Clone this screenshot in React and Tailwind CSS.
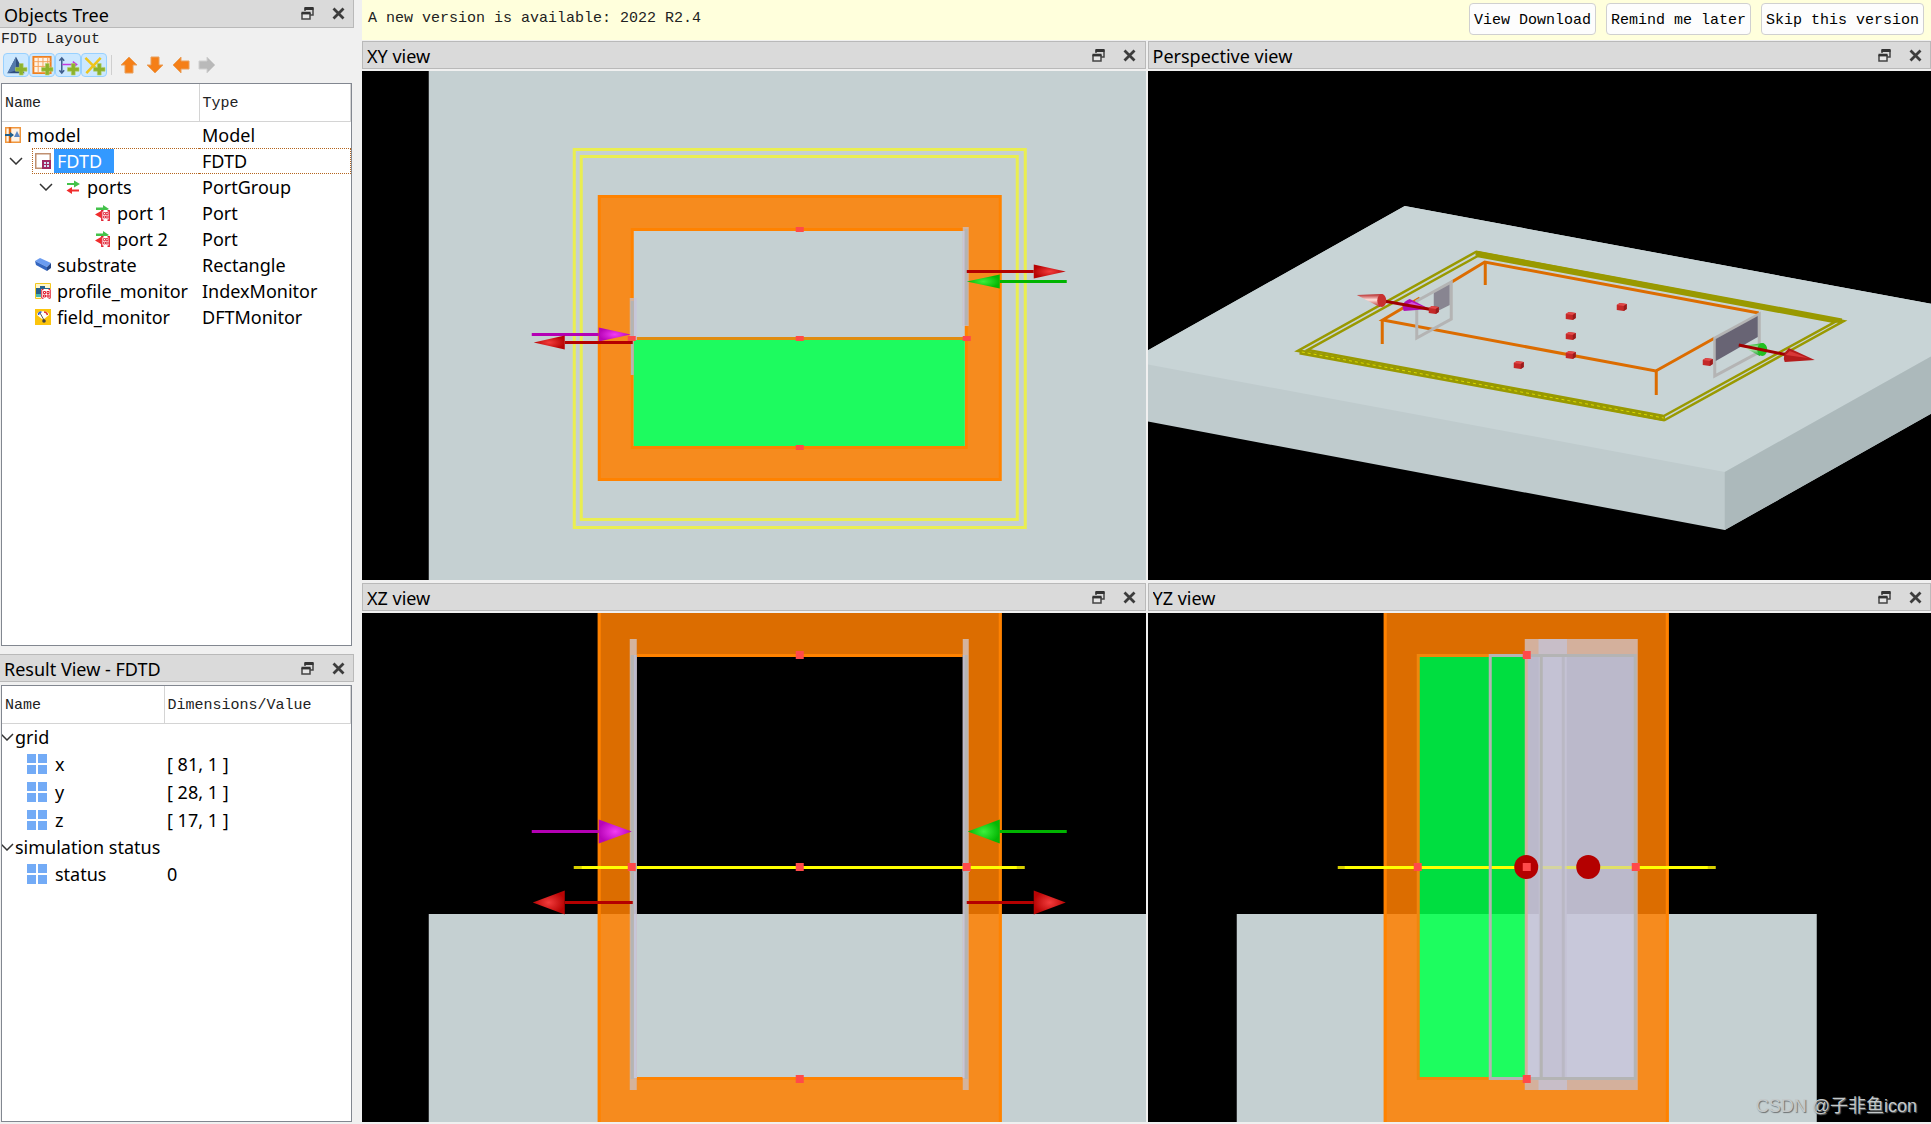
import { useState } from "react";

const MONO = "font-['Liberation_Mono',monospace] text-[15px]";

const TitleBar = ({ title, className = "border-y" }) => (
	<div
		className={`flex h-7 shrink-0 items-center border-r border-[#b9b9b9] bg-[#dadada] pl-1 pr-[5px] ${className}`}
	>
		<h2 className="min-w-0 flex-1 truncate pt-0.5 text-[18px] leading-6">{title}</h2>
		<button type="button" aria-label={`Float ${title}`} className="mr-[11px] flex w-5 justify-center">
			<svg width="13" height="13" viewBox="0 0 13 13" fill="none">
				<path d="M4 4V1.5h8V8H9" stroke="#444" strokeWidth="1.5" />
				<path d="M3.5 1.5h9" stroke="#333" strokeWidth="3" />
				<path d="M1 6.5h8v5.5H1z" stroke="#444" strokeWidth="1.5" fill="#e6e6e6" />
				<path d="M.5 6h9" stroke="#333" strokeWidth="2.5" />
			</svg>
		</button>
		<button type="button" aria-label={`Close ${title}`} className="flex w-5 justify-center">
			<svg width="13" height="13" viewBox="0 0 13 13">
				<path d="M1.5 1.5l10 10M11.5 1.5l-10 10" stroke="#3c3c3c" strokeWidth="2.8" />
			</svg>
		</button>
	</div>
);

const Chevron = () => (
	<svg width="14" height="8" viewBox="0 0 14 8" fill="none">
		<path d="M1 1l6 6 6-6" stroke="#333" strokeWidth="1.5" />
	</svg>
);

const Plus = () => (
	<path d="M15.5 10h4v4h4v4h-4v4h-4v-4h-4v-4h4z" fill="#8db22b" stroke="#b4cf6c" strokeWidth=".6" />
);

const addTools = [
	{
		label: "Add structure",
		art: (
			<>
				<path d="M12 3l9 17H3z" fill="#2f4f80" />
				<path d="M12 3l-9 17 9-3z" fill="#5379ab" />
			</>
		),
	},
	{
		label: "Add simulation region",
		art: (
			<>
				<path d="M3 3h18v17H3z" fill="#fff3e6" stroke="#f0801e" strokeWidth="2" />
				<path d="M8 3v17M13 3v17M3 8h18M3 13h18M18 3v17" stroke="#f4a15a" strokeWidth="1" />
			</>
		),
	},
	{
		label: "Add source",
		art: (
			<>
				<path d="M5.500 4v16M3 7l2.500-3L8 7M3 17l2.500 3L8 17" stroke="#41608f" strokeWidth="1.600" fill="none" />
				<path d="M6 11h14M17 8l4 3-4 3" stroke="#c33ae0" strokeWidth="1.600" fill="none" />
			</>
		),
	},
	{
		label: "Add monitor",
		art: <path d="M3 4l15 15M19 4L4 20" stroke="#efc41a" strokeWidth="2.600" fill="none" />,
	},
];

const moveTools = [
	{ label: "Move up", d: "M9 1l8 8h-4v8H5V9H1z", color: "#f57f17", edge: "#e9a05c" },
	{ label: "Move down", d: "M9 17l8-8h-4V1H5v8H1z", color: "#f57f17", edge: "#e9a05c" },
	{ label: "Move left", d: "M1 9l8-8v4h8v8H9v4z", color: "#f57f17", edge: "#e9a05c" },
	{ label: "Move right", d: "M17 9L9 1v4H1v8h8v4z", color: "#b9b9b9", edge: "#d0d0d0" },
];

const icons = {
	model: (
		<>
			<path d="M.75.75h14.500v14.500H.75z" fill="#fdf3e8" stroke="#f0963c" strokeWidth="1.500" />
			<path d="M5 0v16" stroke="#e0701a" strokeWidth="2.500" />
			<path d="M0 8h8" stroke="#1f5f8c" strokeWidth="2" />
			<path d="M5 5l4 3-4 3z" fill="#1f5f8c" />
			<path d="M12 4l3 6H9z" fill="#5b86c4" />
		</>
	),
	fdtd: (
		<>
			<path d="M.75.75h14.500v14.500H.75z" fill="#fff" stroke="#c09070" strokeWidth="1.500" />
			<path d="M7 7h9v9H7z" fill="#a02860" />
			<path d="M9 9h2v2H9zM12 9h2v2h-2zM9 12h2v2H9zM12 12h2v2h-2z" fill="#cfe0f4" />
		</>
	),
	ports: (
		<>
			<path d="M2 4h7V1.500L15 5 9 8.500V6H2z" fill="#43c24a" />
			<path d="M14 10.500H7V8l-5.500 3.500L7 15v-2.500h7z" fill="#f02c2c" />
		</>
	),
	port: (
		<>
			<path d="M1 2.500h7V0l6 4-6 3V5H1z" fill="#43c24a" />
			<path d="M0 9.500L6 6v7z" fill="#f02c2c" />
			<path d="M6 5h10v11H6z" fill="#fff" />
			<path d="M8.500 5.750H6.750v9.500H8.500M12.500 5.750h1.750v9.500H12.500" stroke="#e02030" strokeWidth="1.300" fill="none" />
			<path d="M8.500 7.500h2v2h-2zM11 7.500h2v2h-2zM8.500 11h2v2h-2zM11 11h2v2h-2z" fill="none" stroke="#e02030" strokeWidth=".8" />
		</>
	),
	rect: (
		<>
			<path d="M0 4l5-3 11 5-4 4z" fill="#6b9cf0" />
			<path d="M0 4l12 6v4L1 8z" fill="#3466c0" />
			<path d="M12 10l4-4v5l-4 3z" fill="#24488c" />
		</>
	),
	index: (
		<>
			<path d="M.5.5h15v15H.5z" fill="#fff6c8" stroke="#f2c822" />
			<path d="M1 5h4V3h5v2h5v6H1z" fill="#27618c" />
			<path d="M1 11h6v3H1z" fill="#48b8b0" />
			<path d="M6 6h10v10H6z" fill="#fff" />
			<path d="M8.500 6.500H6.750v8.750H8.500M13.500 6.500h1.750v8.750H13.500M8.500 8.500h2v2h-2zM12 8.500h2v2h-2zM8.500 12h2v2h-2zM12 12h2v2h-2z" fill="none" stroke="#e02030" />
		</>
	),
	field: (
		<>
			<path d="M0 0h16v16H0z" fill="#fcc40c" />
			<path d="M2 6c0-5 12-5 12 0l-5 4H7z" fill="#fff" />
			<path d="M3.500 6c0-2 1.500-3 3-3" stroke="#3060e0" strokeWidth="1.500" fill="none" />
			<path d="M9 3c2 0 3 1 3.500 3" stroke="#e03030" strokeWidth="1.500" fill="none" />
			<path d="M5 4l4 7" stroke="#555" />
			<circle cx="9" cy="12" r="1.800" fill="#444" />
		</>
	),
};

const objects = [
	{ name: "model", type: "Model", icon: "model", level: 0 },
	{ name: "FDTD", type: "FDTD", icon: "fdtd", level: 1, open: true },
	{ name: "ports", type: "PortGroup", icon: "ports", level: 2, open: true },
	{ name: "port 1", type: "Port", icon: "port", level: 3 },
	{ name: "port 2", type: "Port", icon: "port", level: 3 },
	{ name: "substrate", type: "Rectangle", icon: "rect", level: 1 },
	{ name: "profile_monitor", type: "IndexMonitor", icon: "index", level: 1 },
	{ name: "field_monitor", type: "DFTMonitor", icon: "field", level: 1 },
];

const results = [
	{ name: "grid", group: true },
	{ name: "x", value: "[ 81, 1 ]" },
	{ name: "y", value: "[ 28, 1 ]" },
	{ name: "z", value: "[ 17, 1 ]" },
	{ name: "simulation status", group: true },
	{ name: "status", value: "0" },
];

const indents = ["pl-0", "pl-0", "pl-[30px]", "pl-[60px]"];

const HeadCell = ({ children, className = "" }) => (
	<th
		scope="col"
		className={`h-[37px] border-b border-r border-[#d4d4d4] pb-0 pl-[3px] pt-1 text-left font-normal text-[#222] ${MONO} ${className}`}
	>
		{children}
	</th>
);

const ObjectsTree = () => {
	const [selected, setSelected] = useState("FDTD");

	return (
		<section className="flex min-h-0 flex-[646] flex-col">
			<TitleBar title="Objects Tree" className="border-b" />
			<div className={`h-6 pl-px leading-6 text-[#222] ${MONO}`}>FDTD Layout</div>
			<div className="mb-1.5 mt-px flex h-6 shrink-0 pl-[3px]">
				{addTools.map(({ label, art }) => (
					<button
						key={label}
						type="button"
						aria-label={label}
						className="flex w-[26px] items-center justify-center rounded-sm border border-[#99d1ff] bg-[#cce8ff]"
					>
						<svg width="24" height="22" viewBox="0 0 24 23">
							{art}
							<Plus />
						</svg>
					</button>
				))}
				<span className="mx-1 my-0.5 w-px bg-[#cfcfcf]" />
				{moveTools.map(({ label, d, color, edge }) => (
					<button
						key={label}
						type="button"
						aria-label={label}
						className="flex w-[26px] items-center justify-center"
					>
						<svg width="18" height="18" viewBox="0 0 18 18">
							<path d={d} fill={color} stroke={edge} strokeWidth="1" />
						</svg>
					</button>
				))}
			</div>
			<div className="ml-px mr-0.5 min-h-0 flex-1 overflow-hidden border border-[#828790] bg-white">
				<table className="w-full table-fixed border-collapse text-[18px] leading-6">
					<thead>
						<tr>
							<HeadCell className="w-[197px]">Name</HeadCell>
							<HeadCell>Type</HeadCell>
						</tr>
					</thead>
					<tbody>
						{objects.map(({ name, type, icon, level, open }) => {
							const active = name === selected;
							return (
								<tr key={name} onClick={() => setSelected(name)}>
									<td className="p-0">
										<div className={`flex ${indents[level]}`}>
											{level > 0 && (
												<span className="flex w-[30px] shrink-0 items-center pl-[7px]">
													{open && (
														<button type="button" aria-label={`Collapse ${name}`}>
															<Chevron />
														</button>
													)}
												</span>
											)}
											<div
												className={`flex h-[26px] flex-1 items-center border border-r-0 pl-0.5 ${
													active ? "border-dotted border-[#b5651d]" : "border-transparent"
												}`}
											>
												<svg width="16" height="16" viewBox="0 0 16 16" className="mr-[3px] shrink-0">
													{icons[icon]}
												</svg>
												<span
													className={`whitespace-nowrap pl-[3px] ${
														active ? "bg-[#3399ff] pr-3 text-white" : ""
													}`}
												>
													{name}
												</span>
											</div>
										</div>
									</td>
									<td className="p-0">
										<div
											className={`h-[26px] border border-l-0 pl-[3px] ${
												active ? "border-dotted border-[#b5651d]" : "border-transparent"
											}`}
										>
											{type}
										</div>
									</td>
								</tr>
							);
						})}
					</tbody>
				</table>
			</div>
		</section>
	);
};

const ResultView = () => (
	<section className="flex min-h-0 flex-[468] flex-col">
		<TitleBar title="Result View - FDTD" />
		<div className="ml-px mr-0.5 mt-[3px] min-h-0 flex-1 overflow-hidden border border-[#828790] bg-white">
			<table className="w-full table-fixed border-collapse text-[18px] leading-[26px]">
				<thead>
					<tr>
						<HeadCell className="w-[162px]">Name</HeadCell>
						<HeadCell>Dimensions/Value</HeadCell>
					</tr>
				</thead>
				<tbody>
					{results.map(({ name, value, group }) =>
						group ? (
							<tr key={name}>
								<td colSpan={2} className="h-[26px] p-0">
									<div className="flex items-center gap-px">
										<button type="button" aria-label={`Collapse ${name}`} className="-ml-0.5">
											<Chevron />
										</button>
										{name}
									</div>
								</td>
							</tr>
						) : (
							<tr key={name}>
								<td className="h-7 p-0">
									<div className="flex items-center gap-2 pl-[25px]">
										<svg width="20" height="20" viewBox="0 0 20 20" className="shrink-0">
											<path d="M0 0h9v9H0zM11 0h9v9h-9zM0 11h9v9H0zM11 11h9v9h-9z" fill="#73abf6" />
										</svg>
										{name}
									</div>
								</td>
								<td className="p-0 pl-[3px]">{value}</td>
							</tr>
						)
					)}
				</tbody>
			</table>
		</div>
	</section>
);

const arrowColors = {
	red: { line: "#b40000", fill: "url(#headRed)" },
	green: { line: "#00b400", fill: "url(#headGreen)" },
	purple: { line: "#b400b4", fill: "url(#headPurple)" },
};

// flat arrow of the orthographic views: shaft tail -> base, cone base -> tip
const Arrow = ({ tail, base, tip, y, half, color }) => (
	<g>
		<path d={`M${tail} ${y}H${base}`} stroke={arrowColors[color].line} strokeWidth="3" />
		<path d={`M${base} ${y - half}L${tip} ${y}L${base} ${y + half}z`} fill={arrowColors[color].fill} />
	</g>
);

const Handles = ({ points, height = 8 }) =>
	points.map(([x, y]) => (
		<rect key={`${x}-${y}`} x={x - 4} y={y - height / 2} width="8" height={height} fill="#ff4a4a" />
	));

const Gradients = () => (
	<svg width="0" height="0" className="absolute" aria-hidden="true">
		<defs>
			<radialGradient id="headRed">
				<stop offset="0" stopColor="#f23c3c" />
				<stop offset="1" stopColor="#b80404" />
			</radialGradient>
			<radialGradient id="headGreen">
				<stop offset="0" stopColor="#3cf03c" />
				<stop offset="1" stopColor="#04b804" />
			</radialGradient>
			<radialGradient id="headPurple">
				<stop offset="0" stopColor="#f23cf2" />
				<stop offset="1" stopColor="#b804b8" />
			</radialGradient>
			<linearGradient id="coneRed" x1="0" y1="0" x2="0" y2="1">
				<stop offset="0" stopColor="#b42020" />
				<stop offset=".45" stopColor="#ffe4e0" />
				<stop offset="1" stopColor="#b42020" />
			</linearGradient>
			<linearGradient id="coneGreen" x1="0" y1="0" x2="0" y2="1">
				<stop offset="0" stopColor="#18b018" />
				<stop offset=".4" stopColor="#c8f4c8" />
				<stop offset="1" stopColor="#0a9a1a" />
			</linearGradient>
		</defs>
	</svg>
);

const XYScene = () => (
	<>
		<path d="M67 0h3000v1000H67z" fill="#c5d0d2" />
		<g fill="none" stroke="#eaee50" strokeWidth="3">
			<path d="M212.500 78.500h451v378h-451z" />
			<path d="M219.500 85.500h436v363h-436z" />
		</g>
		<path
			fillRule="evenodd"
			d="M237.500 125.500h401v283h-401zM270.500 158.500h334v218h-334z"
			fill="#f68b1e"
			stroke="#ff8200"
			strokeWidth="3"
		/>
		<path d="M272 268h331v107H272z" fill="#1dfb5f" />
		<path d="M272 267.500h331" stroke="#e08c10" strokeWidth="3" />
		<path d="M268 227h4v42h-4zM601 156h6v99h-6z" fill="#d4b39d" />
		<path d="M272 227h3v42h-3zM601 160h2v95h-2z" fill="#c6c6da" />
		<path d="M269 230h3v74h-3zM603 158h3v96h-3z" fill="#b4b4b4" />
		<Handles height={5} points={[[438, 158.5], [270, 267.5], [438, 267.5], [605, 267.5], [438, 376.5]]} />
		<Arrow tail={605} base={672} tip={704} y={200.5} half={7} color="red" />
		<Arrow tail={705} base={638} tip={605} y={210.5} half={7} color="green" />
		<Arrow tail={170} base={237} tip={269} y={263.5} half={7} color="purple" />
		<Arrow tail={271} base={203} tip={172} y={271.5} half={7} color="red" />
	</>
);

const Cube = ({ x, y }) => (
	<g>
		<path d={`M${x - 5} ${y - 2}l3-2 7 1v5l-3 2-7-1z`} fill="#c42828" />
		<path d={`M${x - 5} ${y - 2}l3-2 7 1-3 2z`} fill="#e04848" />
		<path d={`M${x + 2} ${y - 1}l3-2v5l-3 2z`} fill="#981c1c" />
	</g>
);

const PerspectiveScene = () => (
	<>
		<path d="M-19 290L257 135L854 246V303L577 459L-19 347z" fill="#bfcbcd" />
		<path d="M-19 290L257 135L854 246L577 401z" fill="#c8d4d6" />
		<path d="M577 401L854 246V303L577 459z" fill="#acb9bb" />
		<g fill="none" stroke="#999900" strokeWidth="2.500">
			<path d="M328 181L696 250L517 349L150 280z" />
			<path d="M330 185L687 251L516 345L160 279z" />
		</g>
		<path d="M328 182L694 250" stroke="#999900" strokeWidth="5" />
		<path d="M152 281L517 348" stroke="#999900" strokeWidth="5" />
		<path d="M154 281L516 347" stroke="#d8d800" strokeDasharray="3 3" />
		<g fill="none" stroke="#dc6c00" strokeWidth="3">
			<path d="M304 211L337 191L611 242M567 267L508 300L235 249L272 227" />
			<path d="M337.500 190v24M234.500 249v24M508.500 299v25" />
		</g>
		<path d="M286 221L302 212V234L286 242z" fill="#888591" />
		<path d="M269 230L303.500 211V248L269 267z" fill="none" stroke="#b4b4b4" strokeWidth="3" />
		<path d="M567 267L611.500 243V281L567 305z" fill="none" stroke="#b4b4b4" strokeWidth="3" />
		<path d="M568 268L610 245V266L568 290z" fill="#686474" />
		<path d="M282 238L262 228Q252 232 256 240z" fill="#b010b4" />
		<path d="M264 231L278 237L258 234z" fill="#d850dc" />
		<path d="M236 230L286 239" stroke="#a00000" strokeWidth="3" />
		<path d="M209 224L235 223L232 236z" fill="url(#coneRed)" />
		<ellipse cx="234" cy="229.500" rx="4.500" ry="6.500" fill="#c83030" />
		<Cube x={423} y={245} />
		<Cube x={474} y={236} />
		<Cube x={423} y={265} />
		<Cube x={423} y={284} />
		<Cube x={371} y={294} />
		<Cube x={560} y={291} />
		<Cube x={286} y={239} />
		<path d="M594 275L616 272L612 285z" fill="url(#coneGreen)" />
		<ellipse cx="614.500" cy="278.500" rx="5" ry="6.500" fill="#22c022" />
		<path d="M591 274L640 284" stroke="#a00000" strokeWidth="3" />
		<path d="M641 277Q634 284 637 291L667 289z" fill="#b41c1c" />
		<path d="M642 280L660 287L638 284z" fill="#d83838" />
	</>
);

const XZScene = () => (
	<>
		<path d="M67 301h3000v1000H67z" fill="#c5d0d2" />
		<path d="M236 -300h404V301H604V42H271V301H236z" fill="#dc6d00" />
		<path d="M236 301h35V465H604V301h36V1000H236z" fill="#f68b1e" />
		<path d="M237.500 -300V1000M638.500 -300V1000" stroke="#ff8200" strokeWidth="3" />
		<path d="M275 42.500H601M275 465.500H601" stroke="#ff8200" strokeWidth="3" />
		<path d="M268 26h7v451h-7zM601 26h6v451h-6z" fill="#d4b39d" />
		<path d="M272 42h3v259h-3zM601 42h2v259h-2z" fill="#bcbacc" />
		<path d="M272 301h3v164h-3zM601 301h2v164h-2z" fill="#c6c6da" />
		<path d="M269 42h3v424h-3zM603 42h3v424h-3z" fill="#b4b4b4" />
		<path d="M212 254.500H663" stroke="#d8d000" strokeWidth="3" />
		<path d="M220 254.500H655" stroke="#ffff00" strokeWidth="3" />
		<path d="M271.500 250v9M604.500 250v9" stroke="#b4b4b4" strokeWidth="7" />
		<Handles points={[[438, 42], [270, 254], [438, 254], [605, 254], [438, 466]]} />
		<Arrow tail={170} base={237} tip={270} y={218.5} half={12} color="purple" />
		<Arrow tail={705} base={638} tip={606} y={218.5} half={12} color="green" />
		<Arrow tail={271} base={203} tip={171} y={289.5} half={12} color="red" />
		<Arrow tail={605} base={672} tip={704} y={289.5} half={12} color="red" />
	</>
);

const YZScene = () => (
	<>
		<path d="M89 301h580v1000H89z" fill="#c5d0d2" />
		<path d="M236 -300h285V301H236z" fill="#dc6d00" />
		<path d="M236 301h285V1000H236z" fill="#f68b1e" />
		<path d="M237.500 -300V1000M519.500 -300V1000" stroke="#ff8200" strokeWidth="3" />
		<path d="M271 42h107v259H271z" fill="#00de40" />
		<path d="M271 301h107v164H271z" fill="#1dfd5f" />
		<path d="M377 42.500H270.500V465.500H377" fill="none" stroke="#f0860c" strokeWidth="3" />
		<path d="M190 254.500H568" stroke="#d8d000" strokeWidth="3" />
		<path d="M197 254.500H560" stroke="#ffff00" strokeWidth="3" />
		<path d="M377 26h113v451H377z" fill="#d4b09c" />
		<path d="M380 42h107v259H380z" fill="#bbb9cb" />
		<path d="M380 301h107v164H380z" fill="#c8c8da" />
		<path d="M391 26h28v451h-28z" fill="#c4c2d4" />
		<path d="M391 26h28v16h-28zM391 466h28v11h-28z" fill="#c8bec8" />
		<path d="M391 254.500h28" stroke="#d4d4a0" strokeWidth="3" />
		<path d="M419 254.500h67" stroke="#e0e066" strokeWidth="3" />
		<path d="M415.500 42V465" stroke="#bab8c4" strokeWidth="3" />
		<path d="M415.500 42.500H342.500V465.500H415.500" fill="none" stroke="#b4b4b4" strokeWidth="3" />
		<path d="M393.500 42.500h94v423h-94z" fill="none" stroke="#b4b4b4" strokeWidth="3" />
		<circle cx="378.500" cy="254" r="12" fill="#b40000" />
		<circle cx="440.500" cy="254" r="12" fill="#b40000" />
		<Handles points={[[270, 254], [379, 42], [379, 254], [488, 254], [379, 466]]} />
	</>
);

const views = [
	{ title: "XY view", Scene: XYScene },
	{ title: "Perspective view", Scene: PerspectiveScene },
	{ title: "XZ view", Scene: XZScene },
	{ title: "YZ view", Scene: YZScene },
];

const ViewPanel = ({ title, children }) => (
	<section className="flex min-h-0 min-w-0 flex-col gap-0.5">
		<TitleBar title={title} className="border-y border-l" />
		<div className="min-h-0 flex-1 overflow-hidden bg-black">
			<svg
				className="h-full w-full"
				viewBox="0 0 784 509"
				preserveAspectRatio="xMidYMid slice"
				role="img"
				aria-label={title}
			>
				{children}
			</svg>
		</div>
	</section>
);

const UpdateBanner = () => (
	<div className="flex h-10 shrink-0 items-start gap-2.5 bg-[#ffffdc] pl-1.5 pr-[7px] pt-[3px]">
		<p className={`flex-1 leading-8 text-[#222] ${MONO}`}>A new version is available: 2022 R2.4</p>
		{["View Download", "Remind me later", "Skip this version"].map((label) => (
			<button
				key={label}
				type="button"
				className={`h-8 rounded border border-[#d0d0d0] bg-[#fdfdfd] px-1 pt-1 ${MONO}`}
			>
				{label}
			</button>
		))}
	</div>
);

export default function App() {
	return (
		<div className="relative flex h-screen gap-2 overflow-hidden bg-[#f0f0f0] font-['Noto_Sans','Noto_Sans_CJK_SC',sans-serif] text-black">
			<Gradients />
			<aside className="flex w-[354px] shrink-0 flex-col gap-2 pb-0.5">
				<ObjectsTree />
				<ResultView />
			</aside>
			<main className="flex min-w-0 flex-1 flex-col gap-px pb-0.5">
				<UpdateBanner />
				<div className="grid min-h-0 flex-1 grid-cols-2 grid-rows-2 gap-x-0.5 gap-y-[3px]">
					{views.map(({ title, Scene }) => (
						<ViewPanel key={title} title={title}>
							<Scene />
						</ViewPanel>
					))}
				</div>
			</main>
			<span className="absolute bottom-1.5 right-3.5 font-['Liberation_Sans','Noto_Sans_CJK_SC',sans-serif] text-[18px] leading-6 text-[#c4c8c9] [text-shadow:1px_1px_1px_#6b6f70]">
				CSDN @子非鱼icon
			</span>
		</div>
	);
}
